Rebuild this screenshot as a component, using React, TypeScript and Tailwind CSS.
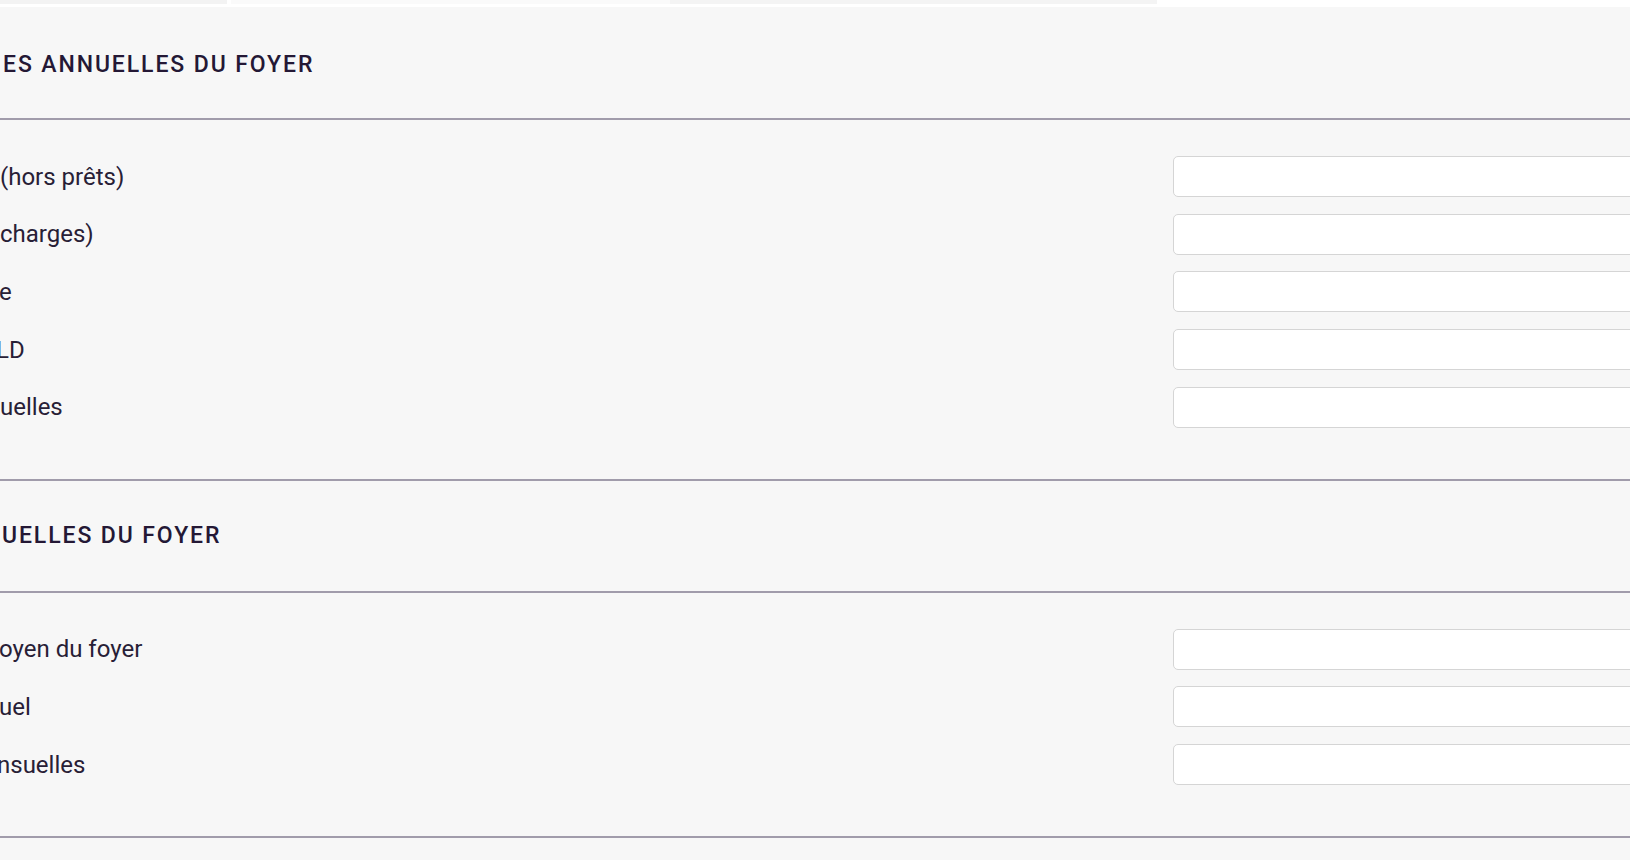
import React from "react";

interface Field {
  label: string;
  offset: string;
}

const annualCharges: Field[] = [
  { label: "(hors prêts)", offset: "ml-0" },
  { label: "charges)", offset: "ml-0" },
  { label: "e", offset: "-ml-[1px]" },
  { label: "LD", offset: "-ml-[4px]" },
  { label: "uelles", offset: "ml-0" },
];

const monthlyResources: Field[] = [
  { label: "oyen du foyer", offset: "-ml-[1px]" },
  { label: "uel", offset: "-ml-[1px]" },
  { label: "nsuelles", offset: "-ml-[3px]" },
];

function SectionHeader({ title, offset, height }: { title: string; offset: string; height: string }) {
  return (
    <div className={`${height} flex items-center overflow-hidden border-b-2 border-[#a19cab]`}>
      <h2
        className={`${offset} whitespace-nowrap text-[23px] font-medium tracking-[1.9px] text-[#241835]`}
        style={{ fontFamily: "Roboto, 'Liberation Sans', sans-serif" }}
      >
        {title}
      </h2>
    </div>
  );
}

function FieldRow({ field }: { field: Field }) {
  return (
    <div className="grid grid-cols-[1173px_1fr] items-center h-[41px]">
      <div className="overflow-hidden">
        <span
          className={`${field.offset} block whitespace-nowrap text-[24px] text-[#282036]`}
          style={{ fontFamily: "Roboto, 'Liberation Sans', sans-serif" }}
        >
          {field.label}
        </span>
      </div>
      <input
        type="text"
        className="w-[560px] h-[41px] bg-white border-[1.5px] border-[#d5d5d5] rounded-[5px] outline-none"
      />
    </div>
  );
}

function FieldList({ fields }: { fields: Field[] }) {
  return (
    <div className="flex flex-col gap-[16.7px] pt-[36px] pb-[51px] border-b-2 border-[#a19cab]">
      {fields.map((f) => (
        <FieldRow key={f.label} field={f} />
      ))}
    </div>
  );
}

export default function App() {
  return (
    <div className="w-[1630px] h-[860px] overflow-hidden bg-[#f7f7f7]">
      {/* bandeau d'onglets en haut */}
      <div className="h-[7px] bg-white">
        <div className="flex h-[4px]">
          <div className="w-[227px] bg-[#f3f3f3]" />
          <div className="w-[4px] bg-white" />
          <div className="w-[439px] bg-[#fafafa]" />
          <div className="w-[487px] bg-[#f4f4f4]" />
          <div className="flex-1 bg-white" />
        </div>
      </div>

      <SectionHeader title="ES ANNUELLES DU FOYER" offset="ml-[3px] mt-[5px]" height="h-[113px]" />
      <FieldList fields={annualCharges} />

      <SectionHeader title="UELLES DU FOYER" offset="ml-[2px]" height="h-[112px]" />
      <FieldList fields={monthlyResources} />
    </div>
  );
}
